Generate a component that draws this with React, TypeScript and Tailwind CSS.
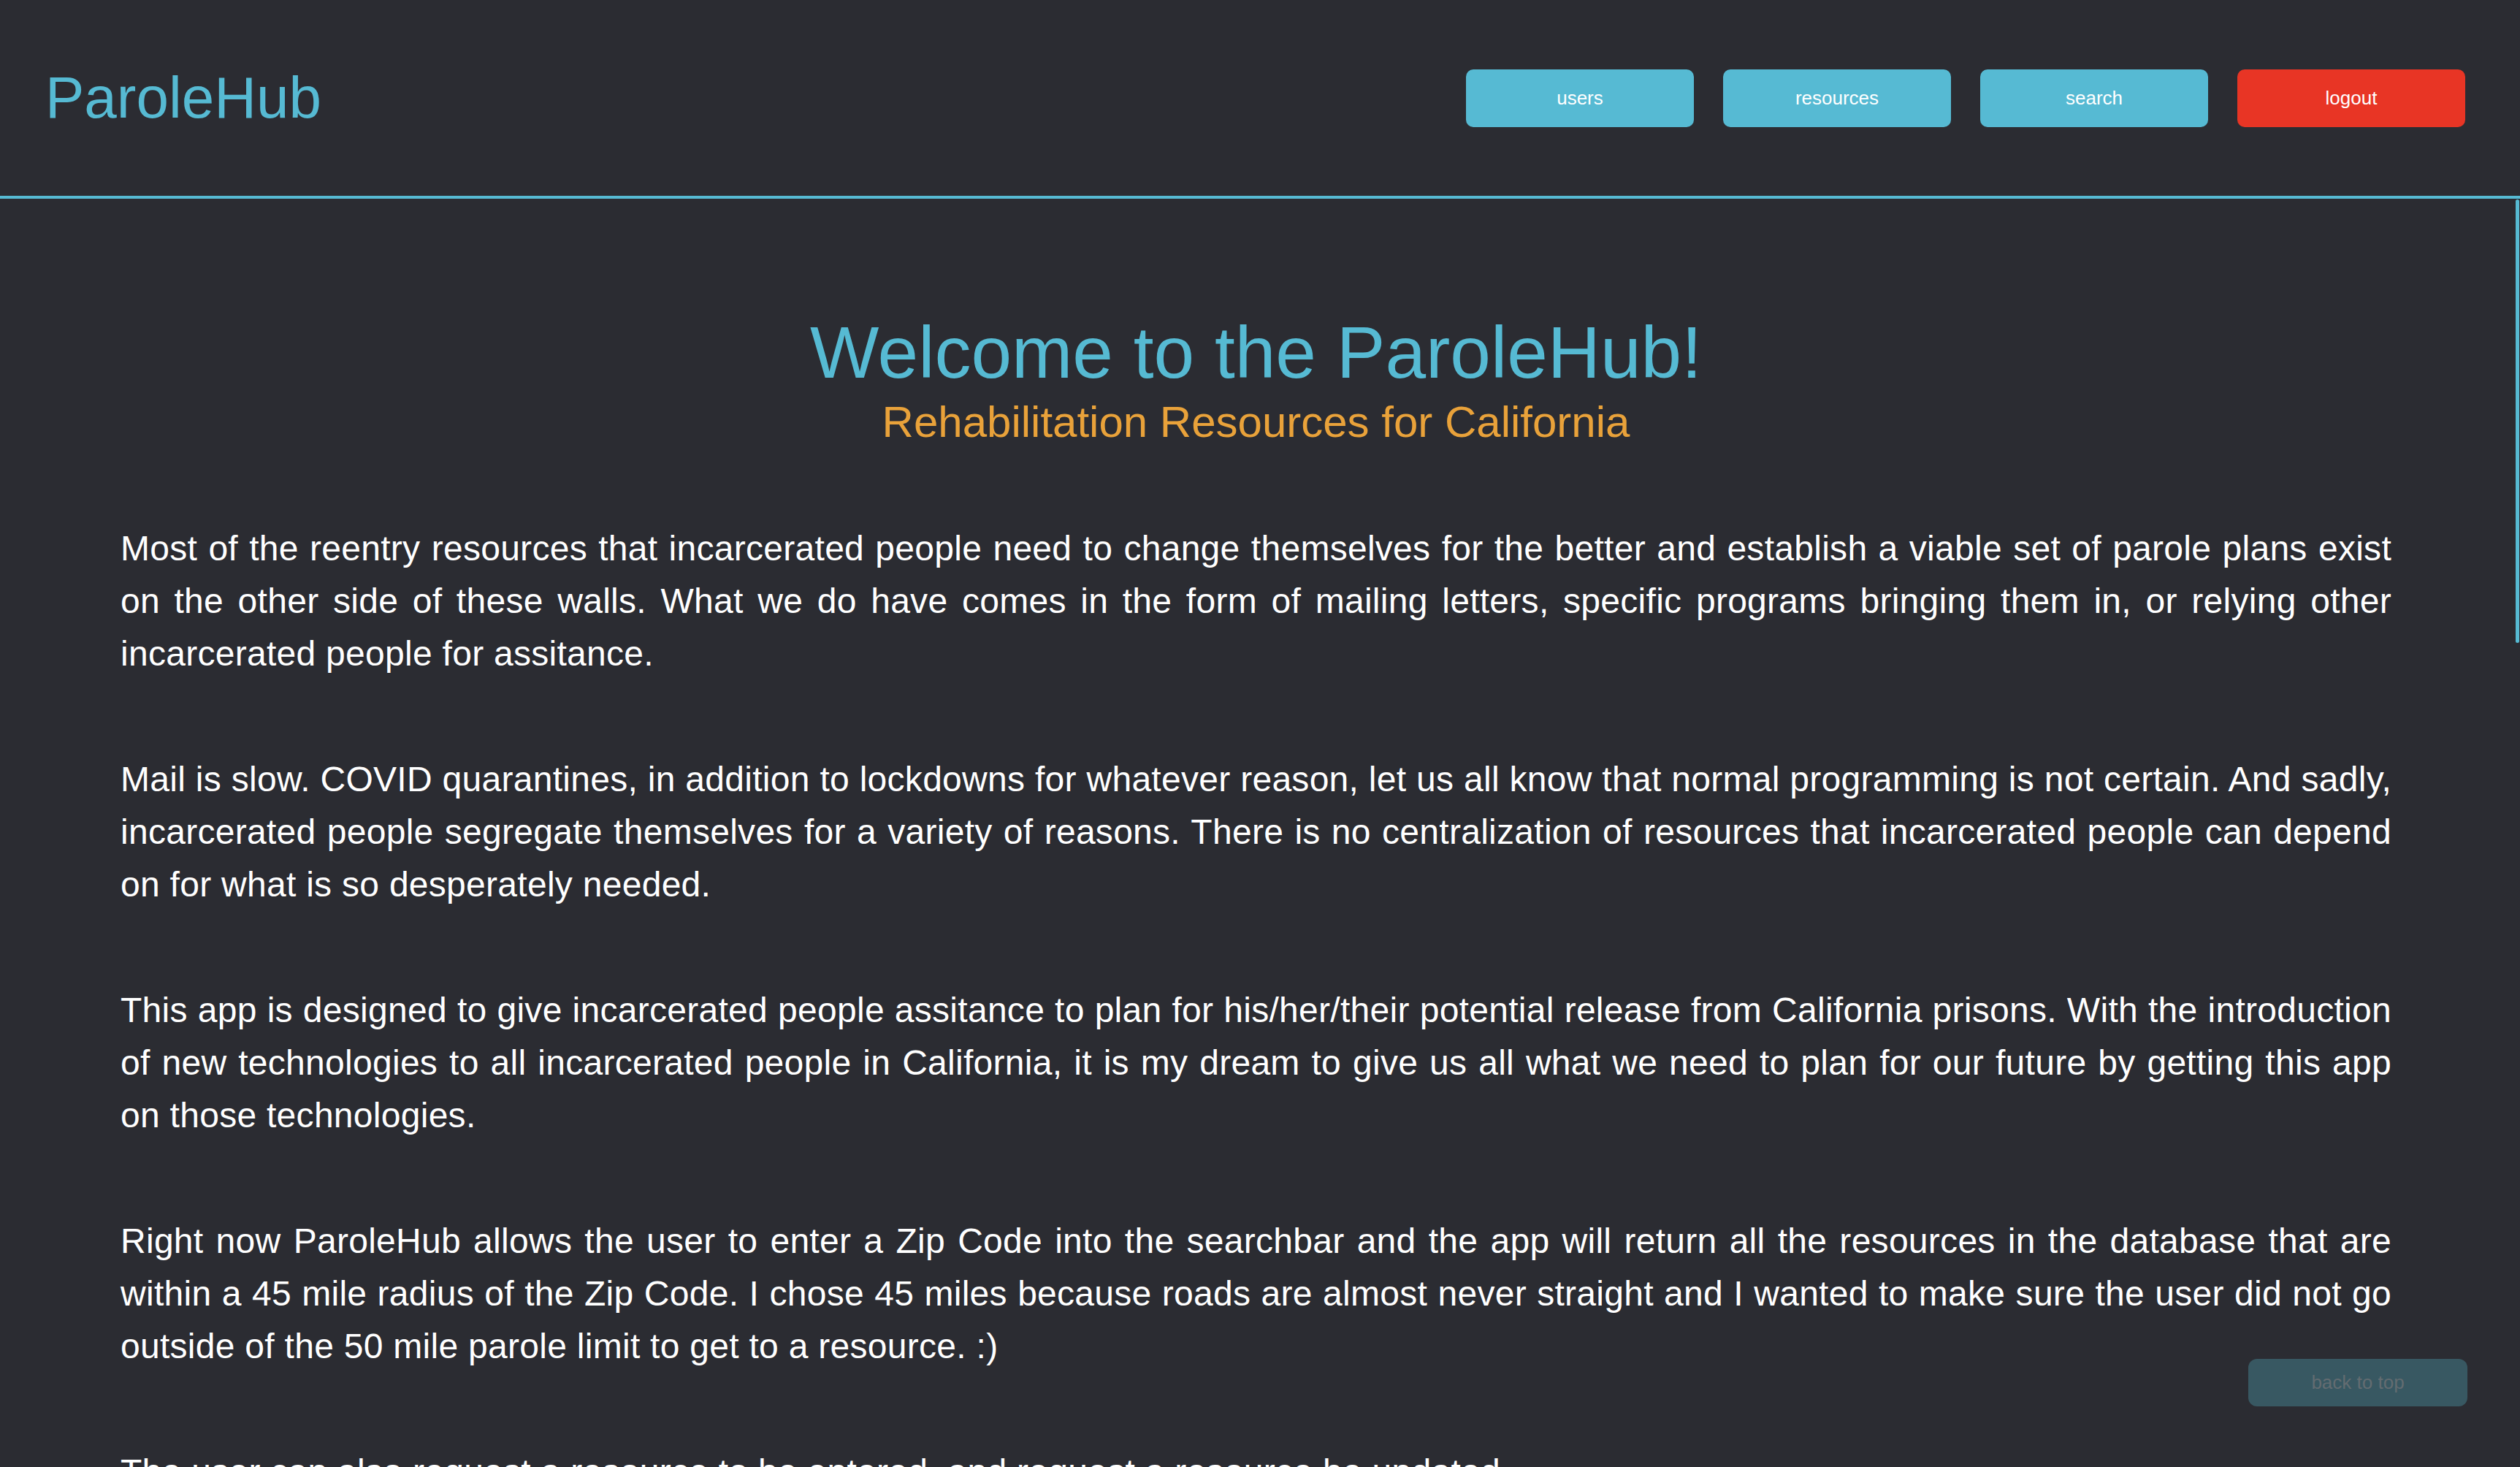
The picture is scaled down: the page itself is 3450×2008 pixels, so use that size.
import { useRef } from 'react';

const NAV = [
  { label: 'users', danger: false },
  { label: 'resources', danger: false },
  { label: 'search', danger: false },
  { label: 'logout', danger: true },
];

const PARAGRAPHS = [
  'Most of the reentry resources that incarcerated people need to change themselves for the better and establish a viable set of parole plans exist on the other side of these walls. What we do have comes in the form of mailing letters, specific programs bringing them in, or relying other incarcerated people for assitance.',
  'Mail is slow. COVID quarantines, in addition to lockdowns for whatever reason, let us all know that normal programming is not certain. And sadly, incarcerated people segregate themselves for a variety of reasons. There is no centralization of resources that incarcerated people can depend on for what is so desperately needed.',
  'This app is designed to give incarcerated people assitance to plan for his/her/their potential release from California prisons. With the introduction of new technologies to all incarcerated people in California, it is my dream to give us all what we need to plan for our future by getting this app on those technologies.',
  'Right now ParoleHub allows the user to enter a Zip Code into the searchbar and the app will return all the resources in the database that are within a 45 mile radius of the Zip Code. I chose 45 miles because roads are almost never straight and I wanted to make sure the user did not go outside of the 50 mile parole limit to get to a resource. :)',
  'The user can also request a resource to be entered, and request a resource be updated.',
];

export default function App() {
  const scrollRef = useRef<HTMLDivElement>(null);

  return (
    <div className="h-screen flex flex-col bg-[#2b2c32] font-['Liberation_Sans',Arial,sans-serif]">
      {/* Header */}
      <header className="h-[272px] shrink-0 border-b-4 border-[#56bad3] flex items-center justify-between pl-[62px] pr-[75px]">
        <h1 className="text-[80px] leading-none text-[#56bad3]">ParoleHub</h1>
        <nav className="flex gap-[40px]">
          {NAV.map(item => (
            <button
              key={item.label}
              className={[
                'w-[312px] h-[79px] rounded-[10px] text-white text-[26px]',
                item.danger ? 'bg-[#e83525]' : 'bg-[#56bad3]',
              ].join(' ')}
            >
              {item.label}
            </button>
          ))}
        </nav>
      </header>

      {/* Scrolling content */}
      <div className="relative flex-1 min-h-0">
        <div
          ref={scrollRef}
          className="h-full overflow-y-auto [scrollbar-width:none] [&::-webkit-scrollbar]:hidden"
        >
          <main className="min-h-[4960px] pt-[150px] pl-[165px] pr-[176px]">
            <div className="text-center">
              <h2 className="text-[100px] leading-[120px] text-[#56bad3]">Welcome to the ParoleHub!</h2>
              <h3 className="text-[60px] leading-[72px] text-[#e9a23a]">Rehabilitation Resources for California</h3>
            </div>

            <div className="mt-[101px]">
              {PARAGRAPHS.map((text, i) => (
                <p key={i} className="text-white text-[48px] leading-[72px] tracking-[0.28px] text-justify mb-[100px]">
                  {text}
                </p>
              ))}
            </div>
          </main>
        </div>

        {/* scrollbar thumb */}
        <div className="absolute right-[1px] top-[1px] w-[5px] h-[607px] rounded-[3px] bg-[#56bad3]" />
      </div>

      {/* Back to top */}
      <button
        onClick={() => scrollRef.current?.scrollTo({ top: 0 })}
        className="fixed right-[72px] bottom-[83px] w-[300px] h-[65px] rounded-[12px] bg-[#385862] text-[#636c71] text-[26px]"
      >
        back to top
      </button>
    </div>
  );
}
